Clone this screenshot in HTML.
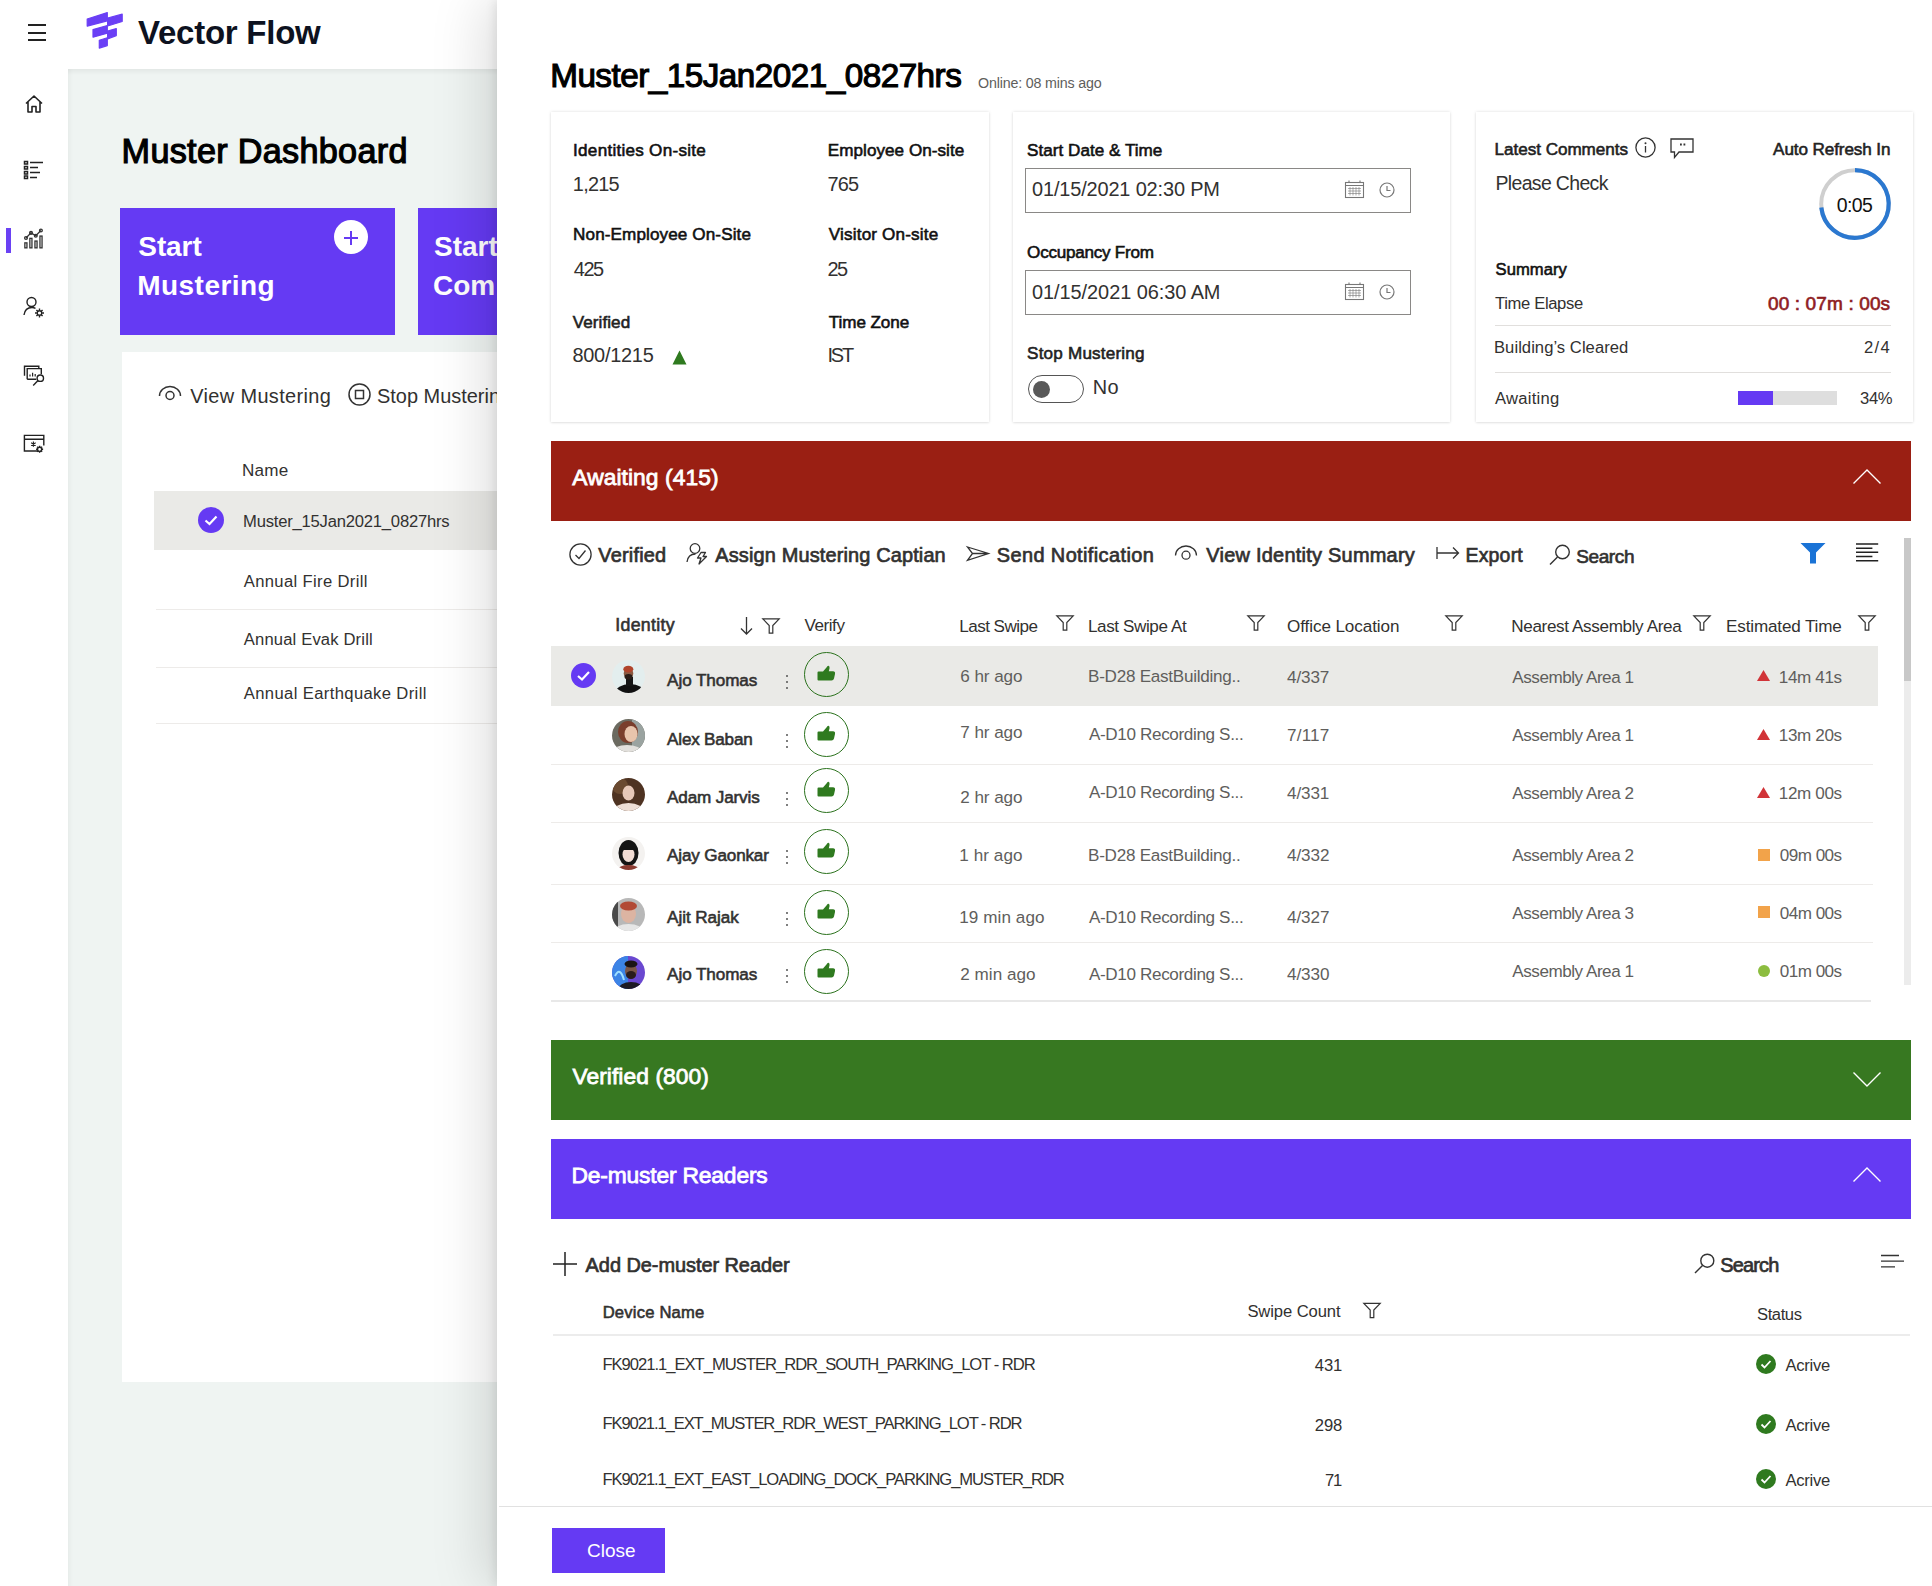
<!DOCTYPE html>
<html><head><meta charset="utf-8">
<style>
*{margin:0;padding:0;box-sizing:border-box}
html,body{width:1932px;height:1586px;overflow:hidden;background:#fff;font-family:"Liberation Sans",sans-serif}
.a{position:absolute}
.t{position:absolute;white-space:nowrap;line-height:1;font-family:"Liberation Sans",sans-serif}
svg{position:absolute;overflow:visible}
.sep{position:absolute;height:1px;background:#edebe9}
.card{position:absolute;background:#fff;box-shadow:0 0 3px rgba(0,0,0,0.13),0 1px 2px rgba(0,0,0,0.06)}
.hdr{position:absolute;left:551px;width:1360px;height:80px}
.inp{position:absolute;border:1px solid #8a8886;background:#fff}
.thumb{position:absolute;width:45px;height:45px;border:1.8px solid #2b721d;border-radius:50%}
.av{position:absolute;width:33px;height:33px;border-radius:50%;overflow:hidden}
</style></head>
<body>
<!-- left sidebar -->
<div class="a" style="left:0;top:0;width:68px;height:1586px;background:#fff"></div>
<!-- header -->
<div class="a" style="left:68px;top:0;width:1864px;height:69px;background:#fff"></div>
<!-- gray main bg -->
<div class="a" style="left:68px;top:69px;width:1864px;height:1517px;background:#eff4f2"></div>
<div class="a" style="left:68px;top:69px;width:1864px;height:6px;background:linear-gradient(rgba(0,0,0,0.05),rgba(0,0,0,0))"></div>
<div class="a" style="left:68px;top:69px;width:5px;height:1517px;background:linear-gradient(90deg,rgba(0,0,0,0.03),rgba(0,0,0,0))"></div>

<!-- hamburger -->
<div class="a" style="left:28px;top:24px;width:18px;height:2px;background:#222"></div>
<div class="a" style="left:28px;top:32px;width:18px;height:2px;background:#222"></div>
<div class="a" style="left:28px;top:39px;width:18px;height:2px;background:#222"></div>

<!-- logo -->
<svg style="left:80px;top:5px" width="50" height="50" viewBox="0 0 50 50">
 <g fill="#6a3ff5" stroke="#6a3ff5" stroke-width="1.2" stroke-linejoin="round">
  <path d="M7.2 14 L27.3 7.6 L27.3 15.8 L7.2 21.2 Z"/>
  <path d="M27.6 13 L42.2 9.2 L42.2 16.5 L27.6 21 Z"/>
  <path d="M13 24.6 L27.3 20.5 L27.3 28.2 L13 32.2 Z"/>
  <path d="M27.6 26 L36.3 23.6 L36.3 30.6 L27.6 34 Z"/>
  <path d="M19.3 35.3 L27.3 32.8 L27.3 40.6 L19.3 43.1 Z"/>
 </g>
</svg>

<!-- sidebar icons -->
<svg style="left:24px;top:94px" width="20" height="20" viewBox="0 0 20 20"><path d="M2 9.5 L10 2 L18 9.5 M4 8 V18 H8 V12.5 H12 V18 H16 V8" fill="none" stroke="#222" stroke-width="1.6" stroke-linejoin="round"/></svg>
<svg style="left:23px;top:160px" width="22" height="20" viewBox="0 0 22 20"><g fill="none" stroke="#222" stroke-width="1.5"><rect x="1.5" y="1.5" width="3" height="2.5"/><rect x="1.5" y="6.5" width="3" height="2.5"/><rect x="1.5" y="11.5" width="3" height="2.5"/><rect x="1.5" y="16" width="3" height="2.5"/><path d="M7 2.5 H20 M7 7.5 H15 M7 12.5 H17 M7 17.5 H14"/></g></svg>
<div class="a" style="left:6px;top:228px;width:5px;height:25px;background:#6a41f4"></div>
<svg style="left:15px;top:220px" width="40" height="40" viewBox="0 0 40 40"><g fill="none" stroke="#333" stroke-width="1.3"><rect x="9.85" y="22.85" width="2.1" height="5"/><rect x="14.85" y="18.35" width="2.1" height="9.5"/><rect x="19.95" y="21.05" width="2.1" height="6.8"/><rect x="24.95" y="16.05" width="2.1" height="11.8"/><path d="M11 18 L16 12.9 L20.8 15.8 L25.9 10.5"/><circle cx="11" cy="18" r="1.4"/><circle cx="16" cy="12.9" r="1.4"/><circle cx="20.8" cy="15.8" r="1.4"/><circle cx="25.9" cy="10.5" r="1.4"/></g></svg>
<svg style="left:23px;top:296px" width="22" height="22" viewBox="0 0 22 22"><g fill="none" stroke="#222" stroke-width="1.4"><circle cx="8.5" cy="6" r="4.5"/><path d="M1 19 Q2 11.5 9 11.5 Q11 11.5 12.5 12.3"/><circle cx="16.5" cy="17" r="2.3"/><path d="M16.5 12.5 V14.3 M16.5 19.7 V21.5 M12 17 H13.8 M19.2 17 H21 M13.4 13.9 L14.6 15.1 M18.4 18.9 L19.6 20.1 M13.4 20.1 L14.6 18.9 M18.4 15.1 L19.6 13.9"/></g></svg>
<svg style="left:15px;top:355px" width="40" height="110" viewBox="0 0 40 110"><g fill="none" stroke="#222" stroke-width="1.4"><path d="M9.5 20.8 V11.2 H23.8 V13.3"/><path d="M12.2 24.3 V13.6 H26.3 V19.2 M12.2 24.3 H21.2"/><path d="M15 21.5 V19.6 M17.6 21.5 V17.8 M20.2 21.5 V19" stroke-width="1.2"/><circle cx="25.3" cy="23.2" r="3.2"/><path d="M23 25.6 L18.2 30.5"/><path d="M22.5 96 H9.4 V80.4 H28.8 V90.5 M9.4 84.3 H28.8"/><path d="M18.4 86.4 V91.8 M16.1 87.8 L20.7 90.4 M16.1 90.4 L20.7 87.8" stroke-width="1.1"/><circle cx="24.6" cy="94.3" r="2.1"/><path d="M24.6 90.8 V92 M24.6 96.6 V97.8 M21.1 94.3 H22.3 M26.9 94.3 H28.1 M22.1 91.8 L22.9 92.6 M26.3 96 L27.1 96.8 M22.1 96.8 L22.9 96 M26.3 92.6 L27.1 91.8"/></g></svg>


<!-- purple cards -->
<div class="a" style="left:120px;top:208px;width:275px;height:127px;background:#653af3"></div>
<div class="a" style="left:418px;top:208px;width:275px;height:127px;background:#653af3"></div>
<div class="a" style="left:334px;top:220px;width:34px;height:34px;border-radius:50%;background:#fff"></div>
<div class="a" style="left:344.3px;top:236.5px;width:14px;height:2px;background:#653af3"></div>
<div class="a" style="left:350.3px;top:230.5px;width:2px;height:14px;background:#653af3"></div>

<!-- white list panel -->
<div class="a" style="left:122px;top:352px;width:900px;height:1030px;background:#fff"></div>
<svg style="left:158px;top:385px" width="24" height="16" viewBox="0 0 24 16"><g fill="none" stroke="#333" stroke-width="1.5"><path d="M1.5 11 A10.5 9.5 0 0 1 22.5 11"/><circle cx="12" cy="10.5" r="4"/></g></svg>
<svg style="left:348px;top:383px" width="24" height="24" viewBox="0 0 24 24"><g fill="none" stroke="#333" stroke-width="1.5"><circle cx="11.5" cy="11.5" r="10.5"/><rect x="7.5" y="7.5" width="8" height="8"/></g></svg>
<div class="a" style="left:154px;top:491px;width:900px;height:59px;background:#eaeae7"></div>
<div class="a" style="left:198px;top:507px;width:26px;height:26px;border-radius:50%;background:#653af3"></div>
<svg style="left:198px;top:507px" width="26" height="26" viewBox="0 0 26 26"><path d="M7.5 13.5 L11.5 17 L18.5 9.5" fill="none" stroke="#fff" stroke-width="2.2"/></svg>
<div class="sep" style="left:156px;top:609px;width:900px"></div>
<div class="sep" style="left:156px;top:667px;width:900px"></div>
<div class="sep" style="left:156px;top:723px;width:900px"></div>

<div class="t" style="left:138.0px;top:15.6px;font-size:33px;font-weight:700;color:#0d1220;letter-spacing:-0.25px;">Vector Flow</div>
<div class="t" style="left:121.6px;top:134.4px;font-size:34.2px;font-weight:400;color:#000;letter-spacing:0.31px;-webkit-text-stroke:1.16px #000;">Muster Dashboard</div>
<div class="t" style="left:138.3px;top:233.0px;font-size:28px;font-weight:700;color:#fff;letter-spacing:-0.09px;">Start</div>
<div class="t" style="left:137.3px;top:272.3px;font-size:28px;font-weight:700;color:#fff;letter-spacing:0.44px;">Mustering</div>
<div class="t" style="left:434.0px;top:233.0px;font-size:28px;font-weight:700;color:#fff;letter-spacing:0.00px;">Start</div>
<div class="t" style="left:433.0px;top:272.3px;font-size:28px;font-weight:700;color:#fff;letter-spacing:0.00px;">Com</div>
<div class="t" style="left:190.3px;top:386.7px;font-size:19.95px;font-weight:400;color:#323130;letter-spacing:0.35px;">View Mustering</div>
<div class="t" style="left:377.0px;top:386.7px;font-size:19.95px;font-weight:400;color:#323130;letter-spacing:0.00px;">Stop Mustering</div>
<div class="t" style="left:241.9px;top:461.6px;font-size:17.1px;font-weight:400;color:#323130;letter-spacing:0.27px;">Name</div>
<div class="t" style="left:243.0px;top:514.0px;font-size:16.62px;font-weight:400;color:#323130;letter-spacing:-0.21px;">Muster_15Jan2021_0827hrs</div>
<div class="t" style="left:243.8px;top:573.5px;font-size:16.62px;font-weight:400;color:#323130;letter-spacing:0.34px;">Annual Fire Drill</div>
<div class="t" style="left:243.8px;top:631.7px;font-size:16.62px;font-weight:400;color:#323130;letter-spacing:0.15px;">Annual Evak Drill</div>
<div class="t" style="left:243.8px;top:685.7px;font-size:16.62px;font-weight:400;color:#323130;letter-spacing:0.37px;">Annual Earthquake Drill</div>
<!-- ===== overlay panel ===== -->
<div class="a" style="left:497px;top:0;width:1435px;height:1586px;background:#fff;box-shadow:-14px 0 50px rgba(0,0,0,0.13),-2px 0 10px rgba(0,0,0,0.09)"></div>

<!-- cards -->
<div class="card" style="left:551px;top:112px;width:438px;height:310px"></div>
<div class="card" style="left:1013px;top:112px;width:437px;height:310px"></div>
<div class="card" style="left:1476px;top:112px;width:437px;height:310px"></div>

<!-- green triangle -->
<svg style="left:672px;top:350px" width="15" height="15" viewBox="0 0 15 15"><path d="M7.5 0.5 L14.5 14.5 H0.5 Z" fill="#2f7a1f"/></svg>

<!-- inputs -->
<div class="inp" style="left:1025px;top:168px;width:386px;height:45px"></div>
<div class="inp" style="left:1025px;top:270px;width:386px;height:45px"></div>
<svg style="left:1345px;top:180px" width="19" height="18" viewBox="0 0 19 18"><g fill="none" stroke="#777" stroke-width="1.1"><rect x="0.5" y="2.5" width="18" height="15"/><path d="M0.5 5.5 H18.5 M4 0.5 V3 M15 0.5 V3"/><path d="M3 8.5 H16 M3 11 H16 M3 13.5 H16 M5 7 V15.5 M8 7 V15.5 M11 7 V15.5 M14 7 V15.5" stroke-width="0.6"/></g></svg>
<svg style="left:1379px;top:182px" width="16" height="16" viewBox="0 0 16 16"><g fill="none" stroke="#777" stroke-width="1.2"><circle cx="8" cy="8" r="7"/><path d="M8 4 V8.5 H11.5"/></g></svg>
<svg style="left:1345px;top:282px" width="19" height="18" viewBox="0 0 19 18"><g fill="none" stroke="#777" stroke-width="1.1"><rect x="0.5" y="2.5" width="18" height="15"/><path d="M0.5 5.5 H18.5 M4 0.5 V3 M15 0.5 V3"/><path d="M3 8.5 H16 M3 11 H16 M3 13.5 H16 M5 7 V15.5 M8 7 V15.5 M11 7 V15.5 M14 7 V15.5" stroke-width="0.6"/></g></svg>
<svg style="left:1379px;top:284px" width="16" height="16" viewBox="0 0 16 16"><g fill="none" stroke="#777" stroke-width="1.2"><circle cx="8" cy="8" r="7"/><path d="M8 4 V8.5 H11.5"/></g></svg>
<!-- toggle -->
<div class="a" style="left:1028px;top:375px;width:56px;height:28px;border:1.5px solid #555;border-radius:14px;background:#fff"></div>
<div class="a" style="left:1033px;top:381px;width:17px;height:17px;border-radius:50%;background:#595959"></div>

<!-- card3 icons -->
<svg style="left:1635px;top:137px" width="21" height="21" viewBox="0 0 21 21"><g fill="none" stroke="#333" stroke-width="1.3"><circle cx="10.5" cy="10.5" r="9.6"/><path d="M10.5 9 V15.5"/></g><circle cx="10.5" cy="6.3" r="1" fill="#333"/></svg>
<svg style="left:1670px;top:138px" width="24" height="21" viewBox="0 0 24 21"><g fill="none" stroke="#333" stroke-width="1.3"><path d="M1 1 H23 V14 H9 L4.5 19.5 V14 H1 Z"/></g><rect x="10" y="5.5" width="1.8" height="2" fill="#333"/><rect x="13.5" y="5.5" width="1.8" height="2" fill="#333"/></svg>
<svg style="left:1819px;top:168px" width="72" height="72" viewBox="0 0 72 72">
 <circle cx="36" cy="36" r="33.8" fill="none" stroke="#cfcfcf" stroke-width="4"/>
 <path d="M36 2.2 A33.8 33.8 0 1 1 2.3 39.5" fill="none" stroke="#2b78d0" stroke-width="4.2"/>
</svg>
<div class="sep" style="left:1495px;top:325px;width:396px;background:#e1dfdd"></div>
<div class="sep" style="left:1495px;top:372px;width:396px;background:#e1dfdd"></div>
<div class="a" style="left:1738px;top:391px;width:99px;height:14px;background:#dedede"></div>
<div class="a" style="left:1738px;top:391px;width:35px;height:14px;background:#653af3"></div>

<!-- Awaiting header -->
<div class="hdr" style="top:441px;background:#9a1f13"></div>
<svg style="left:1852px;top:468px" width="30" height="17" viewBox="0 0 30 17"><path d="M1.5 15.5 L15 2 L28.5 15.5" fill="none" stroke="#fff" stroke-width="1.4"/></svg>

<!-- toolbar icons -->
<svg style="left:569px;top:543px" width="23" height="23" viewBox="0 0 23 23"><g fill="none" stroke="#333" stroke-width="1.3"><circle cx="11.5" cy="11.5" r="10.6"/><path d="M6.5 12 L10 15.5 L16.5 7.5"/></g></svg>
<svg style="left:686px;top:541px" width="24" height="24" viewBox="0 0 24 24"><g fill="none" stroke="#333" stroke-width="1.3"><circle cx="9" cy="7.5" r="4.8"/><path d="M1 21 Q2 13 9.5 13"/><path d="M15 11.5 L11.5 17 H15 L13 23 L20.5 15.5 H17 L19.5 11.5 Z" stroke-linejoin="round"/></g></svg>
<svg style="left:966px;top:546px" width="24" height="16" viewBox="0 0 24 16"><g fill="none" stroke="#333" stroke-width="1.3" stroke-linejoin="miter"><path d="M1.5 1 L22.5 7.5 L1.5 14.3 L6.5 7.5 Z M6.5 7.5 H22.5"/></g></svg>
<svg style="left:1174px;top:545px" width="24" height="16" viewBox="0 0 24 16"><g fill="none" stroke="#333" stroke-width="1.3"><path d="M1.5 10.5 A10.5 9.5 0 0 1 22.5 10.5"/><circle cx="12" cy="10.2" r="4"/></g></svg>
<svg style="left:1436px;top:546px" width="24" height="14" viewBox="0 0 24 14"><g fill="none" stroke="#333" stroke-width="1.3"><path d="M1 1 V13 M1 7 H22.5 M17 1.5 L22.5 7 L17 12.5"/></g></svg>
<svg style="left:1549px;top:544px" width="22" height="22" viewBox="0 0 22 22"><g fill="none" stroke="#333" stroke-width="1.4"><circle cx="13.5" cy="8" r="6.8"/><path d="M8.5 13 L1 20.5"/></g></svg>
<svg style="left:1800px;top:542px" width="26" height="22" viewBox="0 0 26 22"><path d="M0.5 1 H25.5 L16 10.5 V21.5 H10 V10.5 Z" fill="#1a73d6"/></svg>
<svg style="left:1856px;top:540px" width="24" height="24" viewBox="0 0 24 24"><g stroke="#222" stroke-width="1.5"><path d="M0 4 H22.2 M0 8.2 H16.4 M0 12.3 H22.2 M0 16.5 H16.4 M0 20.8 H22.2"/></g></svg>
<!-- scrollbar -->
<div class="a" style="left:1904px;top:538px;width:7px;height:447px;background:#ececec"></div>
<div class="a" style="left:1904px;top:538px;width:7px;height:143px;background:#c8c8c8"></div>

<!-- table header icons -->
<svg style="left:740px;top:617px" width="13" height="18" viewBox="0 0 13 18"><g fill="none" stroke="#333" stroke-width="1.3"><path d="M6.5 0 V17 M1 11.5 L6.5 17 L12 11.5"/></g></svg>
<svg class="flt" style="left:762px;top:618px" width="18" height="16" viewBox="0 0 18 16"><path d="M0.8 0.8 H17.2 L10.8 7.5 V15.2 H7.2 V7.5 Z" fill="none" stroke="#333" stroke-width="1.2"/></svg>
<svg class="flt" style="left:1056px;top:615px" width="18" height="16" viewBox="0 0 18 16"><path d="M0.8 0.8 H17.2 L10.8 7.5 V15.2 H7.2 V7.5 Z" fill="none" stroke="#333" stroke-width="1.2"/></svg>
<svg class="flt" style="left:1247px;top:615px" width="18" height="16" viewBox="0 0 18 16"><path d="M0.8 0.8 H17.2 L10.8 7.5 V15.2 H7.2 V7.5 Z" fill="none" stroke="#333" stroke-width="1.2"/></svg>
<svg class="flt" style="left:1445px;top:615px" width="18" height="16" viewBox="0 0 18 16"><path d="M0.8 0.8 H17.2 L10.8 7.5 V15.2 H7.2 V7.5 Z" fill="none" stroke="#333" stroke-width="1.2"/></svg>
<svg class="flt" style="left:1693px;top:615px" width="18" height="16" viewBox="0 0 18 16"><path d="M0.8 0.8 H17.2 L10.8 7.5 V15.2 H7.2 V7.5 Z" fill="none" stroke="#333" stroke-width="1.2"/></svg>
<svg class="flt" style="left:1858px;top:615px" width="18" height="16" viewBox="0 0 18 16"><path d="M0.8 0.8 H17.2 L10.8 7.5 V15.2 H7.2 V7.5 Z" fill="none" stroke="#333" stroke-width="1.2"/></svg>

<!-- rows -->
<div class="a" style="left:551px;top:646px;width:1327px;height:60px;background:#eaeae7"></div>
<div class="a" style="left:571px;top:663px;width:25px;height:25px;border-radius:50%;background:#653af3"></div>
<svg style="left:571px;top:663px" width="25" height="25" viewBox="0 0 25 25"><path d="M7 13 L11 16.5 L18 9" fill="none" stroke="#fff" stroke-width="2.2"/></svg>
<svg style="left:612px;top:660.0px" width="33" height="33" viewBox="0 0 33 33"><defs><clipPath id="cp0"><circle cx="16.5" cy="16.5" r="16.5"/></clipPath></defs><g clip-path="url(#cp0)"><rect width="33" height="33" fill="#e3eeee"/><ellipse cx="18" cy="33" rx="15" ry="9" fill="#111"/><rect x="14" y="17" width="7" height="9" fill="#151515"/><circle cx="16.5" cy="13.5" r="4.8" fill="#8a5a42"/><ellipse cx="16.5" cy="16.8" rx="4" ry="2.8" fill="#2a1c16"/><ellipse cx="16.3" cy="9.2" rx="5" ry="3.4" fill="#b0452c"/></g></svg>
<div class="a" style="left:786px;top:674.9px;width:2px;height:2px;border-radius:1px;background:#555"></div>
<div class="a" style="left:786px;top:680.9px;width:2px;height:2px;border-radius:1px;background:#555"></div>
<div class="a" style="left:786px;top:686.9px;width:2px;height:2px;border-radius:1px;background:#555"></div>
<div class="thumb" style="left:804px;top:651.9px"></div>
<svg style="left:817px;top:664.9px" width="19" height="17" viewBox="0 0 19 17"><path d="M0.5 7.5 Q0.5 6.5 1.5 6.5 H6 L9.5 2.5 Q10.5 0.5 11.5 0.8 Q13 1.3 12.5 3.5 L11.8 6.3 H16 Q18.5 6.5 18 9 L17 13.5 Q16.5 15.5 14.5 15.5 H1.5 Q0.5 15.5 0.5 14.5 Z" fill="#2f7a1f"/></svg>
<svg style="left:1757px;top:670px" width="13" height="11" viewBox="0 0 13 11"><path d="M6.5 0 L13 11 H0 Z" fill="#d13438"/></svg>
<svg style="left:612px;top:718.5px" width="33" height="33" viewBox="0 0 33 33"><defs><clipPath id="cp1"><circle cx="16.5" cy="16.5" r="16.5"/></clipPath></defs><g clip-path="url(#cp1)"><rect width="33" height="33" fill="#6b6a60"/><rect x="20" width="13" height="33" fill="#9aa3a0"/><ellipse cx="16" cy="13" rx="10" ry="11" fill="#7a3e2c"/><ellipse cx="19" cy="15" rx="6.5" ry="8" fill="#e8c4ac"/><ellipse cx="15" cy="33" rx="15" ry="7" fill="#e2e0dc"/></g></svg>
<div class="a" style="left:786px;top:734.1px;width:2px;height:2px;border-radius:1px;background:#555"></div>
<div class="a" style="left:786px;top:740.1px;width:2px;height:2px;border-radius:1px;background:#555"></div>
<div class="a" style="left:786px;top:746.1px;width:2px;height:2px;border-radius:1px;background:#555"></div>
<div class="thumb" style="left:804px;top:711.5px"></div>
<svg style="left:817px;top:724.5px" width="19" height="17" viewBox="0 0 19 17"><path d="M0.5 7.5 Q0.5 6.5 1.5 6.5 H6 L9.5 2.5 Q10.5 0.5 11.5 0.8 Q13 1.3 12.5 3.5 L11.8 6.3 H16 Q18.5 6.5 18 9 L17 13.5 Q16.5 15.5 14.5 15.5 H1.5 Q0.5 15.5 0.5 14.5 Z" fill="#2f7a1f"/></svg>
<svg style="left:1757px;top:729px" width="13" height="11" viewBox="0 0 13 11"><path d="M6.5 0 L13 11 H0 Z" fill="#d13438"/></svg>
<svg style="left:612px;top:778.0px" width="33" height="33" viewBox="0 0 33 33"><defs><clipPath id="cp2"><circle cx="16.5" cy="16.5" r="16.5"/></clipPath></defs><g clip-path="url(#cp2)"><rect width="33" height="33" fill="#4e3322"/><circle cx="8" cy="8" r="8" fill="#6a4a30"/><ellipse cx="16.5" cy="15" rx="6" ry="7.5" fill="#e6c8b8"/><ellipse cx="16.5" cy="34" rx="16" ry="9" fill="#eedfd6"/></g></svg>
<div class="a" style="left:786px;top:792.0px;width:2px;height:2px;border-radius:1px;background:#555"></div>
<div class="a" style="left:786px;top:798.0px;width:2px;height:2px;border-radius:1px;background:#555"></div>
<div class="a" style="left:786px;top:804.0px;width:2px;height:2px;border-radius:1px;background:#555"></div>
<div class="thumb" style="left:804px;top:768.0px"></div>
<svg style="left:817px;top:781.0px" width="19" height="17" viewBox="0 0 19 17"><path d="M0.5 7.5 Q0.5 6.5 1.5 6.5 H6 L9.5 2.5 Q10.5 0.5 11.5 0.8 Q13 1.3 12.5 3.5 L11.8 6.3 H16 Q18.5 6.5 18 9 L17 13.5 Q16.5 15.5 14.5 15.5 H1.5 Q0.5 15.5 0.5 14.5 Z" fill="#2f7a1f"/></svg>
<svg style="left:1757px;top:787px" width="13" height="11" viewBox="0 0 13 11"><path d="M6.5 0 L13 11 H0 Z" fill="#d13438"/></svg>
<svg style="left:612px;top:836.5px" width="33" height="33" viewBox="0 0 33 33"><defs><clipPath id="cp3"><circle cx="16.5" cy="16.5" r="16.5"/></clipPath></defs><g clip-path="url(#cp3)"><rect width="33" height="33" fill="#f4f2f0"/><ellipse cx="16.5" cy="16" rx="10" ry="13" fill="#141414"/><ellipse cx="16.5" cy="17.5" rx="6" ry="7.5" fill="#f2dcd4"/><rect x="10" y="9" width="13" height="4" fill="#141414"/><ellipse cx="16.5" cy="33" rx="11" ry="5" fill="#8a3a30"/></g></svg>
<div class="a" style="left:786px;top:850.0px;width:2px;height:2px;border-radius:1px;background:#555"></div>
<div class="a" style="left:786px;top:856.0px;width:2px;height:2px;border-radius:1px;background:#555"></div>
<div class="a" style="left:786px;top:862.0px;width:2px;height:2px;border-radius:1px;background:#555"></div>
<div class="thumb" style="left:804px;top:829.0px"></div>
<svg style="left:817px;top:842.0px" width="19" height="17" viewBox="0 0 19 17"><path d="M0.5 7.5 Q0.5 6.5 1.5 6.5 H6 L9.5 2.5 Q10.5 0.5 11.5 0.8 Q13 1.3 12.5 3.5 L11.8 6.3 H16 Q18.5 6.5 18 9 L17 13.5 Q16.5 15.5 14.5 15.5 H1.5 Q0.5 15.5 0.5 14.5 Z" fill="#2f7a1f"/></svg>
<div class="a" style="left:1758px;top:849px;width:12px;height:12px;background:#f2a34a"></div>
<svg style="left:612px;top:898.2px" width="33" height="33" viewBox="0 0 33 33"><defs><clipPath id="cp4"><circle cx="16.5" cy="16.5" r="16.5"/></clipPath></defs><g clip-path="url(#cp4)"><rect width="33" height="33" fill="#b8b8b8"/><rect x="0" width="6" height="33" fill="#4a4a4a"/><ellipse cx="16.5" cy="16" rx="7.5" ry="9" fill="#dcb4a2"/><ellipse cx="16.5" cy="8" rx="8.5" ry="4.5" fill="#b24a36"/><ellipse cx="16.5" cy="34" rx="15" ry="8" fill="#e6e6e6"/></g></svg>
<div class="a" style="left:786px;top:912.3px;width:2px;height:2px;border-radius:1px;background:#555"></div>
<div class="a" style="left:786px;top:918.3px;width:2px;height:2px;border-radius:1px;background:#555"></div>
<div class="a" style="left:786px;top:924.3px;width:2px;height:2px;border-radius:1px;background:#555"></div>
<div class="thumb" style="left:804px;top:890.0px"></div>
<svg style="left:817px;top:903.0px" width="19" height="17" viewBox="0 0 19 17"><path d="M0.5 7.5 Q0.5 6.5 1.5 6.5 H6 L9.5 2.5 Q10.5 0.5 11.5 0.8 Q13 1.3 12.5 3.5 L11.8 6.3 H16 Q18.5 6.5 18 9 L17 13.5 Q16.5 15.5 14.5 15.5 H1.5 Q0.5 15.5 0.5 14.5 Z" fill="#2f7a1f"/></svg>
<div class="a" style="left:1758px;top:906px;width:12px;height:12px;background:#f2a34a"></div>
<svg style="left:612px;top:955.5px" width="33" height="33" viewBox="0 0 33 33"><defs><clipPath id="cp5"><circle cx="16.5" cy="16.5" r="16.5"/></clipPath></defs><g clip-path="url(#cp5)"><rect width="33" height="33" fill="#6a48d0"/><rect x="0" width="16" height="33" fill="#3c84e6"/><path d="M3 20 Q8 10 12 24" stroke="#9fe0ff" stroke-width="2" fill="none"/><ellipse cx="19" cy="15" rx="6" ry="7.5" fill="#7a5648"/><ellipse cx="19" cy="19" rx="5" ry="4" fill="#2a1c1c"/><ellipse cx="19" cy="8" rx="6.5" ry="3.5" fill="#1a1414"/><ellipse cx="19" cy="34" rx="13" ry="8" fill="#1d1a24"/></g></svg>
<div class="a" style="left:786px;top:969.2px;width:2px;height:2px;border-radius:1px;background:#555"></div>
<div class="a" style="left:786px;top:975.2px;width:2px;height:2px;border-radius:1px;background:#555"></div>
<div class="a" style="left:786px;top:981.2px;width:2px;height:2px;border-radius:1px;background:#555"></div>
<div class="thumb" style="left:804px;top:949.0px"></div>
<svg style="left:817px;top:962.0px" width="19" height="17" viewBox="0 0 19 17"><path d="M0.5 7.5 Q0.5 6.5 1.5 6.5 H6 L9.5 2.5 Q10.5 0.5 11.5 0.8 Q13 1.3 12.5 3.5 L11.8 6.3 H16 Q18.5 6.5 18 9 L17 13.5 Q16.5 15.5 14.5 15.5 H1.5 Q0.5 15.5 0.5 14.5 Z" fill="#2f7a1f"/></svg>
<div class="a" style="left:1758px;top:965px;width:12px;height:12px;border-radius:50%;background:#8cbd3f"></div>
<div class="sep" style="left:551px;top:764px;width:1322px"></div>
<div class="sep" style="left:551px;top:822px;width:1322px"></div>
<div class="sep" style="left:551px;top:884px;width:1322px"></div>
<div class="sep" style="left:551px;top:942px;width:1322px"></div>
<div class="a" style="left:551px;top:1000px;width:1320px;height:2px;background:#e8e8e8"></div>

<!-- Verified header -->
<div class="hdr" style="top:1040px;background:#377821"></div>
<svg style="left:1852px;top:1071px" width="30" height="17" viewBox="0 0 30 17"><path d="M1.5 1.5 L15 15 L28.5 1.5" fill="none" stroke="#fff" stroke-width="1.4"/></svg>
<!-- De-muster header -->
<div class="hdr" style="top:1139px;background:#653af3"></div>
<svg style="left:1852px;top:1166px" width="30" height="17" viewBox="0 0 30 17"><path d="M1.5 15.5 L15 2 L28.5 15.5" fill="none" stroke="#fff" stroke-width="1.4"/></svg>

<svg style="left:553px;top:1252px" width="24" height="24" viewBox="0 0 24 24"><g stroke="#222" stroke-width="1.5"><path d="M12 0 V24 M0 12 H24"/></g></svg>
<svg style="left:1694px;top:1253px" width="21" height="21" viewBox="0 0 21 21"><g fill="none" stroke="#333" stroke-width="1.4"><circle cx="13.3" cy="7.7" r="6.5"/><path d="M8.5 12.5 L1 20"/></g></svg>
<svg style="left:1881px;top:1254px" width="24" height="16" viewBox="0 0 24 16"><g stroke="#333" stroke-width="1.3"><path d="M0 1.5 H18 M0 7.2 H23 M0 12.8 H14"/></g></svg>
<svg class="flt" style="left:1363px;top:1302px" width="18" height="17" viewBox="0 0 18 16"><path d="M0.8 0.8 H17.2 L10.8 7.5 V15.2 H7.2 V7.5 Z" fill="none" stroke="#333" stroke-width="1.2"/></svg>
<div class="a" style="left:553px;top:1334px;width:1357px;height:2px;background:#ececec"></div>
<svg style="left:1756px;top:1354px" width="20" height="20" viewBox="0 0 20 20"><circle cx="10" cy="10" r="10" fill="#2f7a1f"/><path d="M5.5 10.5 L8.5 13.5 L14.5 7" fill="none" stroke="#fff" stroke-width="1.8"/></svg>
<svg style="left:1756px;top:1414px" width="20" height="20" viewBox="0 0 20 20"><circle cx="10" cy="10" r="10" fill="#2f7a1f"/><path d="M5.5 10.5 L8.5 13.5 L14.5 7" fill="none" stroke="#fff" stroke-width="1.8"/></svg>
<svg style="left:1756px;top:1469px" width="20" height="20" viewBox="0 0 20 20"><circle cx="10" cy="10" r="10" fill="#2f7a1f"/><path d="M5.5 10.5 L8.5 13.5 L14.5 7" fill="none" stroke="#fff" stroke-width="1.8"/></svg>

<div class="a" style="left:499px;top:1506px;width:1433px;height:1px;background:#e1e1e1"></div>
<div class="a" style="left:552px;top:1528px;width:113px;height:45px;background:#653af3"></div>

<div class="t" style="left:550.2px;top:59.0px;font-size:33.25px;font-weight:400;color:#000;letter-spacing:-0.51px;-webkit-text-stroke:1.13px #000;">Muster_15Jan2021_0827hrs</div>
<div class="t" style="left:978.0px;top:76.3px;font-size:14.25px;font-weight:400;color:#605e5c;letter-spacing:-0.17px;">Online: 08 mins ago</div>
<div class="t" style="left:573.1px;top:142.3px;font-size:17.1px;font-weight:400;color:#111;letter-spacing:0.26px;-webkit-text-stroke:0.58px #111;">Identities On-site</div>
<div class="t" style="left:572.8px;top:174.9px;font-size:19.95px;font-weight:400;color:#323130;letter-spacing:-0.75px;">1,215</div>
<div class="t" style="left:827.8px;top:142.3px;font-size:17.1px;font-weight:400;color:#111;letter-spacing:0.04px;-webkit-text-stroke:0.58px #111;">Employee On-site</div>
<div class="t" style="left:827.5px;top:174.9px;font-size:19.95px;font-weight:400;color:#323130;letter-spacing:-0.84px;">765</div>
<div class="t" style="left:573.1px;top:225.6px;font-size:17.1px;font-weight:400;color:#111;letter-spacing:0.11px;-webkit-text-stroke:0.58px #111;">Non-Employee On-Site</div>
<div class="t" style="left:573.8px;top:259.5px;font-size:19.95px;font-weight:400;color:#323130;letter-spacing:-1.49px;">425</div>
<div class="t" style="left:828.8px;top:225.6px;font-size:17.1px;font-weight:400;color:#111;letter-spacing:0.17px;-webkit-text-stroke:0.58px #111;">Visitor On-site</div>
<div class="t" style="left:827.5px;top:259.5px;font-size:19.95px;font-weight:400;color:#323130;letter-spacing:-1.59px;">25</div>
<div class="t" style="left:572.7px;top:313.8px;font-size:17.1px;font-weight:400;color:#222;letter-spacing:0.07px;-webkit-text-stroke:0.58px #222;">Verified</div>
<div class="t" style="left:572.4px;top:345.6px;font-size:19.95px;font-weight:400;color:#323130;letter-spacing:-0.25px;">800/1215</div>
<div class="t" style="left:828.8px;top:313.8px;font-size:17.1px;font-weight:400;color:#111;letter-spacing:-0.08px;-webkit-text-stroke:0.58px #111;">Time Zone</div>
<div class="t" style="left:827.5px;top:345.6px;font-size:19.95px;font-weight:400;color:#323130;letter-spacing:-2.17px;">IST</div>
<div class="t" style="left:1027.1px;top:142.1px;font-size:17.1px;font-weight:400;color:#111;letter-spacing:0.02px;-webkit-text-stroke:0.58px #111;">Start Date &amp; Time</div>
<div class="t" style="left:1032.0px;top:180.3px;font-size:19.95px;font-weight:400;color:#323130;letter-spacing:-0.15px;">01/15/2021 02:30 PM</div>
<div class="t" style="left:1027.1px;top:243.8px;font-size:17.1px;font-weight:400;color:#111;letter-spacing:-0.25px;-webkit-text-stroke:0.58px #111;">Occupancy From</div>
<div class="t" style="left:1032.0px;top:283.1px;font-size:19.95px;font-weight:400;color:#323130;letter-spacing:-0.06px;">01/15/2021 06:30 AM</div>
<div class="t" style="left:1027.1px;top:345.2px;font-size:17.1px;font-weight:400;color:#222;letter-spacing:0.19px;-webkit-text-stroke:0.58px #222;">Stop Mustering</div>
<div class="t" style="left:1092.8px;top:378.0px;font-size:19.95px;font-weight:400;color:#323130;letter-spacing:0.20px;">No</div>
<div class="t" style="left:1494.6px;top:141.1px;font-size:17.1px;font-weight:400;color:#222;letter-spacing:-0.04px;-webkit-text-stroke:0.58px #222;">Latest Comments</div>
<div class="t" style="left:1773.1px;top:141.1px;font-size:17.1px;font-weight:400;color:#222;letter-spacing:-0.10px;-webkit-text-stroke:0.58px #222;">Auto Refresh In</div>
<div class="t" style="left:1495.5px;top:174.2px;font-size:19.47px;font-weight:400;color:#323130;letter-spacing:-0.65px;">Please Check</div>
<div class="t" style="left:1836.7px;top:195.8px;font-size:19.47px;font-weight:400;color:#111;letter-spacing:-0.58px;">0:05</div>
<div class="t" style="left:1495.6px;top:262.4px;font-size:16.62px;font-weight:400;color:#111;letter-spacing:0.03px;-webkit-text-stroke:0.57px #111;">Summary</div>
<div class="t" style="left:1495.0px;top:296.3px;font-size:16.62px;font-weight:400;color:#323130;letter-spacing:-0.35px;">Time Elapse</div>
<div class="t" style="left:1768.0px;top:294.1px;font-size:19.0px;font-weight:400;color:#8f1c1f;letter-spacing:0.13px;-webkit-text-stroke:0.65px #8f1c1f;">00 : 07m : 00s</div>
<div class="t" style="left:1494.0px;top:340.1px;font-size:16.62px;font-weight:400;color:#323130;letter-spacing:0.04px;">Building’s Cleared</div>
<div class="t" style="left:1864.0px;top:340.1px;font-size:16.62px;font-weight:400;color:#323130;letter-spacing:1.32px;">2/4</div>
<div class="t" style="left:1495.0px;top:390.5px;font-size:16.62px;font-weight:400;color:#323130;letter-spacing:0.25px;">Awaiting</div>
<div class="t" style="left:1860.0px;top:390.5px;font-size:16.62px;font-weight:400;color:#323130;letter-spacing:-0.34px;">34%</div>
<div class="t" style="left:572.3px;top:466.1px;font-size:22.8px;font-weight:400;color:#fff;letter-spacing:0.07px;-webkit-text-stroke:0.78px #fff;">Awaiting (415)</div>
<div class="t" style="left:598.3px;top:545.7px;font-size:19.95px;font-weight:400;color:#323130;letter-spacing:0.19px;-webkit-text-stroke:0.68px #323130;">Verified</div>
<div class="t" style="left:715.3px;top:545.7px;font-size:19.95px;font-weight:400;color:#323130;letter-spacing:0.14px;-webkit-text-stroke:0.68px #323130;">Assign Mustering Captian</div>
<div class="t" style="left:996.8px;top:545.7px;font-size:19.95px;font-weight:400;color:#323130;letter-spacing:0.39px;-webkit-text-stroke:0.68px #323130;">Send Notification</div>
<div class="t" style="left:1206.3px;top:545.7px;font-size:19.95px;font-weight:400;color:#323130;letter-spacing:0.25px;-webkit-text-stroke:0.68px #323130;">View Identity Summary</div>
<div class="t" style="left:1465.5px;top:546.0px;font-size:19.47px;font-weight:400;color:#323130;letter-spacing:0.20px;-webkit-text-stroke:0.66px #323130;">Export</div>
<div class="t" style="left:1576.2px;top:547.4px;font-size:19.0px;font-weight:400;color:#323130;letter-spacing:-0.38px;-webkit-text-stroke:0.65px #323130;">Search</div>
<div class="t" style="left:615.3px;top:616.6px;font-size:17.76px;font-weight:400;color:#323130;letter-spacing:0.29px;-webkit-text-stroke:0.6px #323130;">Identity</div>
<div class="t" style="left:804.5px;top:616.5px;font-size:17.1px;font-weight:400;color:#323130;letter-spacing:-0.46px;">Verify</div>
<div class="t" style="left:959.3px;top:617.5px;font-size:17.1px;font-weight:400;color:#323130;letter-spacing:-0.55px;">Last Swipe</div>
<div class="t" style="left:1088.0px;top:617.5px;font-size:17.1px;font-weight:400;color:#323130;letter-spacing:-0.41px;">Last Swipe At</div>
<div class="t" style="left:1287.0px;top:617.5px;font-size:17.1px;font-weight:400;color:#323130;letter-spacing:-0.09px;">Office Location</div>
<div class="t" style="left:1511.3px;top:617.5px;font-size:17.1px;font-weight:400;color:#323130;letter-spacing:-0.36px;">Nearest Assembly Area</div>
<div class="t" style="left:1726.0px;top:617.5px;font-size:17.1px;font-weight:400;color:#323130;letter-spacing:-0.15px;">Estimated Time</div>
<div class="t" style="left:667.1px;top:671.9px;font-size:17.1px;font-weight:400;color:#323130;letter-spacing:-0.07px;-webkit-text-stroke:0.58px #323130;">Ajo Thomas</div>
<div class="t" style="left:960.3px;top:668.2px;font-size:17.1px;font-weight:400;color:#605e5c;letter-spacing:-0.07px;">6 hr ago</div>
<div class="t" style="left:1088.0px;top:668.2px;font-size:17.1px;font-weight:400;color:#605e5c;letter-spacing:-0.26px;">B-D28 EastBuilding..</div>
<div class="t" style="left:1287.0px;top:668.5px;font-size:17.1px;font-weight:400;color:#605e5c;letter-spacing:-0.12px;">4/337</div>
<div class="t" style="left:1512.3px;top:668.5px;font-size:17.1px;font-weight:400;color:#605e5c;letter-spacing:-0.47px;">Assembly Area 1</div>
<div class="t" style="left:1778.8px;top:668.5px;font-size:17.1px;font-weight:400;color:#605e5c;letter-spacing:-0.37px;">14m 41s</div>
<div class="t" style="left:667.1px;top:731.1px;font-size:17.1px;font-weight:400;color:#323130;letter-spacing:-0.20px;-webkit-text-stroke:0.58px #323130;">Alex Baban</div>
<div class="t" style="left:960.3px;top:723.8px;font-size:17.1px;font-weight:400;color:#605e5c;letter-spacing:-0.07px;">7 hr ago</div>
<div class="t" style="left:1089.0px;top:726.2px;font-size:17.1px;font-weight:400;color:#605e5c;letter-spacing:-0.36px;">A-D10 Recording S...</div>
<div class="t" style="left:1287.0px;top:726.5px;font-size:17.1px;font-weight:400;color:#605e5c;letter-spacing:0.20px;">7/117</div>
<div class="t" style="left:1512.3px;top:726.5px;font-size:17.1px;font-weight:400;color:#605e5c;letter-spacing:-0.47px;">Assembly Area 1</div>
<div class="t" style="left:1778.8px;top:726.5px;font-size:17.1px;font-weight:400;color:#605e5c;letter-spacing:-0.37px;">13m 20s</div>
<div class="t" style="left:667.1px;top:789.0px;font-size:17.1px;font-weight:400;color:#323130;letter-spacing:-0.14px;-webkit-text-stroke:0.58px #323130;">Adam Jarvis</div>
<div class="t" style="left:960.3px;top:789.0px;font-size:17.1px;font-weight:400;color:#605e5c;letter-spacing:-0.07px;">2 hr ago</div>
<div class="t" style="left:1089.0px;top:784.2px;font-size:17.1px;font-weight:400;color:#605e5c;letter-spacing:-0.36px;">A-D10 Recording S...</div>
<div class="t" style="left:1287.0px;top:784.5px;font-size:17.1px;font-weight:400;color:#605e5c;letter-spacing:-0.12px;">4/331</div>
<div class="t" style="left:1512.3px;top:784.5px;font-size:17.1px;font-weight:400;color:#605e5c;letter-spacing:-0.47px;">Assembly Area 2</div>
<div class="t" style="left:1778.8px;top:784.5px;font-size:17.1px;font-weight:400;color:#605e5c;letter-spacing:-0.37px;">12m 00s</div>
<div class="t" style="left:667.1px;top:847.0px;font-size:17.1px;font-weight:400;color:#323130;letter-spacing:-0.16px;-webkit-text-stroke:0.58px #323130;">Ajay Gaonkar</div>
<div class="t" style="left:959.3px;top:847.0px;font-size:17.1px;font-weight:400;color:#605e5c;letter-spacing:0.07px;">1 hr ago</div>
<div class="t" style="left:1088.0px;top:846.5px;font-size:17.1px;font-weight:400;color:#605e5c;letter-spacing:-0.26px;">B-D28 EastBuilding..</div>
<div class="t" style="left:1287.0px;top:846.5px;font-size:17.1px;font-weight:400;color:#605e5c;letter-spacing:-0.07px;">4/332</div>
<div class="t" style="left:1512.3px;top:846.5px;font-size:17.1px;font-weight:400;color:#605e5c;letter-spacing:-0.47px;">Assembly Area 2</div>
<div class="t" style="left:1779.8px;top:846.5px;font-size:17.1px;font-weight:400;color:#605e5c;letter-spacing:-0.54px;">09m 00s</div>
<div class="t" style="left:667.1px;top:909.2px;font-size:17.1px;font-weight:400;color:#323130;letter-spacing:-0.06px;-webkit-text-stroke:0.58px #323130;">Ajit Rajak</div>
<div class="t" style="left:959.3px;top:909.2px;font-size:17.1px;font-weight:400;color:#605e5c;letter-spacing:0.07px;">19 min ago</div>
<div class="t" style="left:1089.0px;top:908.5px;font-size:17.1px;font-weight:400;color:#605e5c;letter-spacing:-0.36px;">A-D10 Recording S...</div>
<div class="t" style="left:1287.0px;top:908.9px;font-size:17.1px;font-weight:400;color:#605e5c;letter-spacing:-0.07px;">4/327</div>
<div class="t" style="left:1512.3px;top:904.5px;font-size:17.1px;font-weight:400;color:#605e5c;letter-spacing:-0.47px;">Assembly Area 3</div>
<div class="t" style="left:1779.8px;top:904.5px;font-size:17.1px;font-weight:400;color:#605e5c;letter-spacing:-0.54px;">04m 00s</div>
<div class="t" style="left:667.1px;top:966.2px;font-size:17.1px;font-weight:400;color:#323130;letter-spacing:-0.07px;-webkit-text-stroke:0.58px #323130;">Ajo Thomas</div>
<div class="t" style="left:960.3px;top:966.2px;font-size:17.1px;font-weight:400;color:#605e5c;letter-spacing:0.02px;">2 min ago</div>
<div class="t" style="left:1089.0px;top:966.2px;font-size:17.1px;font-weight:400;color:#605e5c;letter-spacing:-0.36px;">A-D10 Recording S...</div>
<div class="t" style="left:1287.0px;top:965.5px;font-size:17.1px;font-weight:400;color:#605e5c;letter-spacing:-0.07px;">4/330</div>
<div class="t" style="left:1512.3px;top:962.5px;font-size:17.1px;font-weight:400;color:#605e5c;letter-spacing:-0.47px;">Assembly Area 1</div>
<div class="t" style="left:1779.8px;top:962.5px;font-size:17.1px;font-weight:400;color:#605e5c;letter-spacing:-0.54px;">01m 00s</div>
<div class="t" style="left:572.4px;top:1064.8px;font-size:22.8px;font-weight:400;color:#fff;letter-spacing:0.07px;-webkit-text-stroke:0.78px #fff;">Verified (800)</div>
<div class="t" style="left:571.4px;top:1164.0px;font-size:22.8px;font-weight:400;color:#fff;letter-spacing:-0.16px;-webkit-text-stroke:0.78px #fff;">De-muster Readers</div>
<div class="t" style="left:585.6px;top:1256.1px;font-size:19.95px;font-weight:400;color:#323130;letter-spacing:-0.05px;-webkit-text-stroke:0.68px #323130;">Add De-muster Reader</div>
<div class="t" style="left:1720.3px;top:1255.5px;font-size:19.95px;font-weight:400;color:#323130;letter-spacing:-0.83px;-webkit-text-stroke:0.68px #323130;">Search</div>
<div class="t" style="left:602.7px;top:1305.1px;font-size:16.62px;font-weight:400;color:#323130;letter-spacing:0.19px;-webkit-text-stroke:0.57px #323130;">Device Name</div>
<div class="t" style="left:1247.4px;top:1304.2px;font-size:16.62px;font-weight:400;color:#323130;letter-spacing:-0.10px;">Swipe Count</div>
<div class="t" style="left:1757.0px;top:1306.7px;font-size:16.62px;font-weight:400;color:#323130;letter-spacing:-0.42px;">Status</div>
<div class="t" style="left:602.4px;top:1357.2px;font-size:16.62px;font-weight:400;color:#323130;letter-spacing:-1.02px;">FK9021.1_EXT_MUSTER_RDR_SOUTH_PARKING_LOT - RDR</div>
<div class="t" style="left:602.4px;top:1416.3px;font-size:16.62px;font-weight:400;color:#323130;letter-spacing:-1.11px;">FK9021.1_EXT_MUSTER_RDR_WEST_PARKING_LOT - RDR</div>
<div class="t" style="left:602.4px;top:1471.7px;font-size:16.62px;font-weight:400;color:#323130;letter-spacing:-1.09px;">FK9021.1_EXT_EAST_LOADING_DOCK_PARKING_MUSTER_RDR</div>
<div class="t" style="left:1314.8px;top:1358.0px;font-size:16.62px;font-weight:400;color:#323130;letter-spacing:-0.14px;">431</div>
<div class="t" style="left:1314.8px;top:1417.5px;font-size:16.62px;font-weight:400;color:#323130;letter-spacing:-0.14px;">298</div>
<div class="t" style="left:1325.0px;top:1472.7px;font-size:16.62px;font-weight:400;color:#323130;letter-spacing:-1.24px;">71</div>
<div class="t" style="left:1785.5px;top:1358.0px;font-size:16.62px;font-weight:400;color:#323130;letter-spacing:-0.28px;">Acrive</div>
<div class="t" style="left:1785.5px;top:1417.5px;font-size:16.62px;font-weight:400;color:#323130;letter-spacing:-0.28px;">Acrive</div>
<div class="t" style="left:1785.5px;top:1472.7px;font-size:16.62px;font-weight:400;color:#323130;letter-spacing:-0.28px;">Acrive</div>
<div class="t" style="left:587.0px;top:1540.5px;font-size:19.0px;font-weight:400;color:#fff;letter-spacing:-0.00px;">Close</div>
</body></html>
